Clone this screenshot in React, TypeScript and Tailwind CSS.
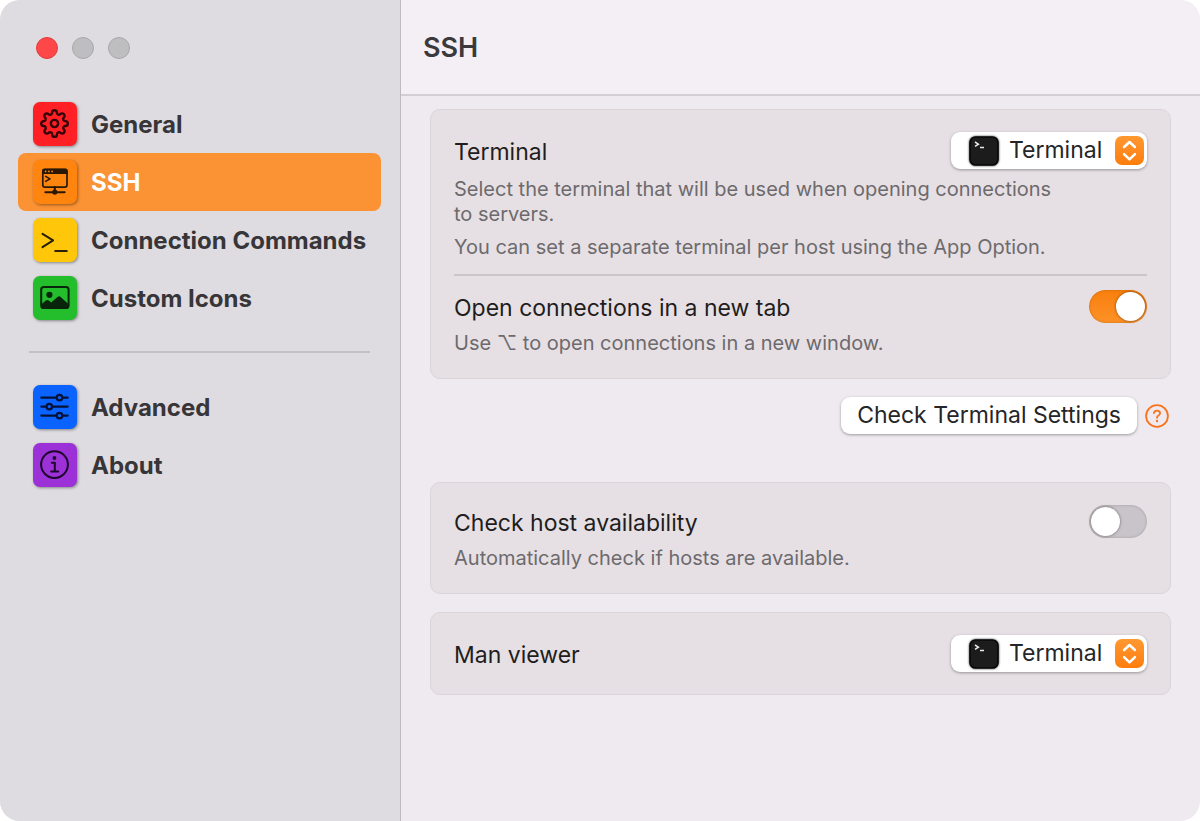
import { useId, useState } from "react";
import type { ReactNode } from "react";
import { FiSettings } from "react-icons/fi";

type NavItem = { label: string; tile: string; icon: ReactNode };

const stroke = {
  fill: "none",
  stroke: "currentColor",
  strokeLinecap: "round" as const,
  strokeLinejoin: "round" as const,
};

function GearIcon() {
  return (
    <span className="flex size-[43px] items-center justify-center">
      <FiSettings className="size-[29px]" strokeWidth={2} aria-hidden="true" />
    </span>
  );
}

function SshIcon() {
  return (
    <svg viewBox="0 0 44 44" className="size-11" aria-hidden="true">
      <rect x="9.8" y="9.6" width="24.2" height="17.6" rx="2.2" {...stroke} strokeWidth="1.7" />
      <path d="M9 14v-3a2.4 2.4 0 0 1 2.4-2.4h21a2.4 2.4 0 0 1 2.4 2.4v3z" fill="currentColor" />
      <g fill="#ff850f">
        <circle cx="12.6" cy="11.4" r="0.9" />
        <circle cx="15.9" cy="11.4" r="0.9" />
        <circle cx="19.2" cy="11.4" r="0.9" />
      </g>
      <path d="M12.6 16.4l4.4 2.5-4.4 2.5" {...stroke} strokeWidth="1.6" />
      <path d="M21.8 27v5M12.3 32.2h19.4" {...stroke} strokeWidth="2" />
      <circle cx="21.8" cy="32.1" r="2.6" fill="currentColor" />
    </svg>
  );
}

function PromptIcon() {
  return (
    <svg viewBox="0 0 44 44" className="size-11" aria-hidden="true" {...stroke} strokeWidth="2">
      <path d="M9.5 15.8l10.6 6.6-10.6 6.8M22.2 33h11.6" />
    </svg>
  );
}

function PictureIcon() {
  return (
    <svg viewBox="0 0 44 44" className="size-11" aria-hidden="true">
      <rect x="8.2" y="11" width="27.4" height="21" rx="2.6" {...stroke} strokeWidth="2" />
      <circle cx="16.4" cy="18.8" r="3.1" fill="currentColor" />
      <path
        d="M8.2 28.4l4.6-4q1.5-1 3 .1l2.3 2 6.4-5.6q1.6-1.2 3.2 0l7.9 7.4v1.5q0 2.2-2.6 2.2H10.8q-2.6 0-2.6-2.4z"
        fill="currentColor"
      />
    </svg>
  );
}

function SlidersIcon() {
  return (
    <svg viewBox="0 0 44 44" className="size-11" aria-hidden="true" {...stroke} strokeWidth="2.2">
      <path d="M8.3 12.6h15.1M29.6 12.6h5.1M8.3 21.6h4.9M19.4 21.6h15.3M8.3 30.6h15.1M29.6 30.6h5.1" />
      <circle cx="26.5" cy="12.6" r="2.8" />
      <circle cx="16.3" cy="21.6" r="2.8" />
      <circle cx="26.5" cy="30.6" r="2.8" />
    </svg>
  );
}

function InfoIcon() {
  return (
    <svg viewBox="0 0 44 44" className="size-11" aria-hidden="true" {...stroke} strokeWidth="2">
      <circle cx="21.5" cy="21.6" r="13.4" />
      <circle cx="21.4" cy="15" r="1.9" fill="currentColor" stroke="none" />
      <path d="M18.8 19.8h3v8.6M18.2 28.6h7" />
    </svg>
  );
}

const mainItems: NavItem[] = [
  { label: "General", tile: "bg-[#ff2025] text-[#360508]", icon: <GearIcon /> },
  { label: "SSH", tile: "bg-[#ff850f] text-[#2a1804]", icon: <SshIcon /> },
  { label: "Connection Commands", tile: "bg-[#ffc60a] text-[#2a2004]", icon: <PromptIcon /> },
  { label: "Custom Icons", tile: "bg-[#24bd2c] text-[#08240b]", icon: <PictureIcon /> },
];

const moreItems: NavItem[] = [
  { label: "Advanced", tile: "bg-[#0b63ff] text-[#051238]", icon: <SlidersIcon /> },
  { label: "About", tile: "bg-[#9b31d6] text-[#1e062c]", icon: <InfoIcon /> },
];

function NavList({
  items,
  current,
  onSelect,
}: {
  items: NavItem[];
  current: string;
  onSelect: (label: string) => void;
}) {
  return (
    <ul>
      {items.map((item) => {
        const active = item.label === current;
        return (
          <li key={item.label}>
            <button
              type="button"
              aria-current={active ? "page" : undefined}
              onClick={() => onSelect(item.label)}
              className={
                active
                  ? "flex h-[58px] w-full items-center gap-[14px] rounded-lg bg-[#fb9234] px-[15px] text-white"
                  : "flex h-[58px] w-full items-center gap-[14px] rounded-lg px-[15px] text-[#373538]"
              }
            >
              <span className={`size-11 shrink-0 rounded-[7px] shadow-[1px_1px_3px_rgba(0,0,0,0.4)] ${item.tile}`}>
                {item.icon}
              </span>
              <span className="pt-[2px] text-2xl font-bold whitespace-nowrap">{item.label}</span>
            </button>
          </li>
        );
      })}
    </ul>
  );
}

function TerminalSelect({ id }: { id: string }) {
  return (
    <div className="relative h-[37px] w-[196px] shrink-0">
      <select
        id={id}
        className="size-full appearance-none rounded-[9px] bg-white pl-[58px] text-[23px] text-[#262527] shadow-[0_1px_3px_rgba(0,0,0,0.35)]"
      >
        <option>Terminal</option>
      </select>
      <svg
        viewBox="0 0 30 30"
        className="pointer-events-none absolute top-1 left-[18px] size-[30px] drop-shadow-[0_0_1px_rgba(0,0,0,0.8)]"
        aria-hidden="true"
      >
        <rect x="1" y="1" width="28" height="28" rx="5.5" fill="#1c1c1d" stroke="#050708" strokeWidth="1.6" />
        <path d="M6 6l3.4 2.2L6 10.4M11 11.5h4" fill="none" stroke="#e8e8e8" strokeWidth="1.5" />
      </svg>
      <svg
        viewBox="0 0 30 30"
        className="pointer-events-none absolute top-1 right-[3px] size-[29px] rounded-[7px] bg-linear-to-b from-[#ff9830] to-[#fd7d08]"
        aria-hidden="true"
        {...stroke}
        stroke="#fff"
        strokeWidth="2.6"
      >
        <path d="M9.4 11.4L15 6.2l5.6 5.2M9.4 18.8l5.6 5.4 5.6-5.4" />
      </svg>
    </div>
  );
}

function Toggle({ id, initial }: { id: string; initial: boolean }) {
  const [on, setOn] = useState(initial);
  return (
    <input
      id={id}
      type="checkbox"
      role="switch"
      checked={on}
      onChange={() => setOn(!on)}
      className="flex h-[33px] w-[58px] shrink-0 appearance-none items-center rounded-full bg-[#c9c4c9] px-[2px] shadow-[inset_0_0_3px_rgba(0,0,0,0.2)] before:size-[29px] before:rounded-full before:bg-white before:shadow-[0_0_3px_rgba(0,0,0,0.5)] checked:justify-end checked:bg-linear-to-b checked:from-[#f97f0c] checked:to-[#fd9126]"
    />
  );
}

function Card({ children }: { children: ReactNode }) {
  return (
    <section className="rounded-[10px] border border-[#dbd5da] bg-[#e6e0e4] px-[23px] py-[22px]">
      {children}
    </section>
  );
}

function Row({ id, label, children }: { id: string; label: string; children: ReactNode }) {
  return (
    <div className="flex items-center justify-between gap-4">
      <label htmlFor={id} className="pt-[3px] text-[23px] leading-[30px] text-[#1f1d20]">
        {label}
      </label>
      {children}
    </div>
  );
}

export default function App() {
  const [current, setCurrent] = useState("SSH");
  const terminalId = useId();
  const tabId = useId();
  const hostId = useId();
  const manId = useId();

  return (
    <div className="min-h-screen bg-white font-['Inter','Liberation_Sans',sans-serif]">
      <div className="flex min-h-screen overflow-hidden rounded-[20px] bg-[#efeaef]">
        <aside className="w-[401px] shrink-0 border-r border-[#bdbbbe] bg-[#dedce0] pr-[19px] pl-[18px]">
          <div className="flex h-[95px] items-center gap-[14px] pl-[18px]">
            <button
              type="button"
              aria-label="Close"
              className="size-[22px] rounded-full border border-[#e33c3d] bg-[#fd4748]"
            />
            <button
              type="button"
              aria-label="Minimize"
              className="size-[22px] rounded-full border border-[#a9a7aa] bg-[#bebdc0]"
            />
            <button
              type="button"
              aria-label="Zoom"
              className="size-[22px] rounded-full border border-[#a9a7aa] bg-[#bebdc0]"
            />
          </div>
          <nav aria-label="Settings">
            <NavList items={mainItems} current={current} onSelect={setCurrent} />
            <hr className="mx-[11px] mt-6 mb-[25px] border-t-2 border-[#c3c1c4]" />
            <NavList items={moreItems} current={current} onSelect={setCurrent} />
          </nav>
        </aside>

        <main className="min-w-0 flex-1">
          <header className="flex h-24 items-center border-b-2 border-[#d3ced4] bg-[#f3eff5] px-[22px] pt-[2px]">
            <h1 className="text-[27px] font-semibold text-[#3b393c]">SSH</h1>
          </header>

          <div className="pt-[13px] pr-[29px] pb-8 pl-[29px]">
            <Card>
              <Row id={terminalId} label="Terminal">
                <TerminalSelect id={terminalId} />
              </Row>
              <div className="mt-2 flex flex-col gap-2 text-xl leading-[25px] text-[#6d6a6d]">
                <p className="max-w-[620px]">
                  Select the terminal that will be used when opening connections to servers.
                </p>
                <p>You can set a separate terminal per host using the App Option.</p>
              </div>
              <hr className="my-[14px] border-t-2 border-[#cac5c9]" />
              <Row id={tabId} label="Open connections in a new tab">
                <Toggle id={tabId} initial />
              </Row>
              <p className="mt-2 text-xl leading-[25px] text-[#6d6a6d]">
                Use ⌥ to open connections in a new window.
              </p>
            </Card>

            <div className="mt-[18px] mb-12 flex items-center justify-end gap-2 pr-[2px]">
              <button
                type="button"
                className="h-[37px] rounded-[9px] bg-white px-4 text-[23px] leading-[37px] text-[#262527] shadow-[0_1px_3px_rgba(0,0,0,0.35)]"
              >
                Check Terminal Settings
              </button>
              <button type="button" aria-label="Help" className="text-[#f9731c]">
                <svg viewBox="0 0 24 24" className="size-6" aria-hidden="true" {...stroke} strokeWidth="1.8">
                  <circle cx="12" cy="12" r="10.9" />
                  <path d="M8.9 9.2q.4-2.6 3.1-2.6t3.1 2.5q0 1.5-1.6 2.4-1.5.8-1.5 2.3" />
                  <circle cx="12" cy="17" r="1.2" fill="currentColor" stroke="none" />
                </svg>
              </button>
            </div>

            <div className="flex flex-col gap-[18px]">
              <Card>
                <Row id={hostId} label="Check host availability">
                  <Toggle id={hostId} initial={false} />
                </Row>
                <p className="mt-2 text-xl leading-[25px] text-[#6d6a6d]">
                  Automatically check if hosts are available.
                </p>
              </Card>
              <Card>
                <Row id={manId} label="Man viewer">
                  <TerminalSelect id={manId} />
                </Row>
              </Card>
            </div>
          </div>
        </main>
      </div>
    </div>
  );
}
